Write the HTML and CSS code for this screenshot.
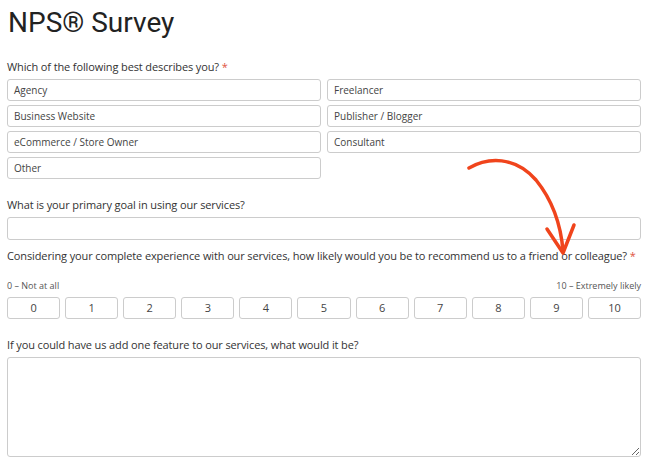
FILE: index.html
```html
<!DOCTYPE html>
<html lang="en">
<head>
  <meta charset="UTF-8" />
  <title>NPS Survey</title>
  <link rel="stylesheet" href="styles.css">
</head>
<body>
  <div class="survey">
    <h1 class="title">NPS&reg; Survey</h1>

    <div class="field field-choices">
      <label class="field-label">Which of the following best describes you? <span class="req">*</span></label>
      <div class="choices">
        <div class="choice">Agency</div>
        <div class="choice">Freelancer</div>
        <div class="choice">Business Website</div>
        <div class="choice">Publisher / Blogger</div>
        <div class="choice">eCommerce / Store Owner</div>
        <div class="choice">Consultant</div>
        <div class="choice">Other</div>
      </div>
    </div>

    <div class="field field-goal">
      <label class="field-label">What is your primary goal in using our services?</label>
      <input class="text-input" type="text">
    </div>

    <div class="field field-nps">
      <label class="field-label">Considering your complete experience with our services, how likely would you be to recommend us to a friend or colleague? <span class="req">*</span></label>
      <div class="scale-labels">
        <span>0 &ndash; Not at all</span>
        <span>10 &ndash; Extremely likely</span>
      </div>
      <div class="scale">
        <div class="scale-btn">0</div>
        <div class="scale-btn">1</div>
        <div class="scale-btn">2</div>
        <div class="scale-btn">3</div>
        <div class="scale-btn">4</div>
        <div class="scale-btn">5</div>
        <div class="scale-btn">6</div>
        <div class="scale-btn">7</div>
        <div class="scale-btn">8</div>
        <div class="scale-btn">9</div>
        <div class="scale-btn">10</div>
      </div>
    </div>

    <div class="field">
      <label class="field-label">If you could have us add one feature to our services, what would it be?</label>
      <textarea class="text-area"></textarea>
    </div>
  </div>

  <!-- hand drawn arrow pointing at the 9 -->
  <svg class="arrow" width="650" height="468" viewBox="0 0 650 468">
    <path d="M469 168 C488 157 515 156 536 180 C553 201 561 226 563 251" />
    <path d="M547 229 L563 253 L574 225" />
  </svg>
</body>
</html>
```

FILE: styles.css
```css
body {
  margin: 0;
  font-family: "Open Sans", "DejaVu Sans", sans-serif;
  color: #333;
  background: #fff;
}

.survey {
  padding: 0 9px 0 7px;
}

.title {
  margin: 0 0 18px;
  padding: 4px 0 0 1px;
  font-family: Roboto, "Open Sans", sans-serif;
  font-size: 28px;
  line-height: 38px;
  font-weight: 400;
  color: #222;
}

/* spacing below each question */
.field-choices {
  margin-bottom: 19px;
}

.field-goal {
  margin-bottom: 9px;
}

.field-nps {
  margin-bottom: 19px;
}

.field-label {
  display: block;
  font-size: 11px;
  line-height: 14px;
  letter-spacing: -0.12px;
  margin-bottom: 5px;
  color: #333;
}

.req {
  color: #e0533f;
}

.choices {
  display: grid;
  grid-template-columns: 1fr 1fr;
  column-gap: 6px;
  row-gap: 4px;
}

.choice {
  height: 22px;
  box-sizing: border-box;
  border: 1px solid #ccc;
  border-radius: 3px;
  padding: 0 6px;
  font-size: 10px;
  line-height: 20px;
  color: #444;
}

.text-input {
  display: block;
  width: 100%;
  height: 23px;
  box-sizing: border-box;
  border: 1px solid #ccc;
  border-radius: 3px;
  margin: 0;
}

.scale-labels {
  display: flex;
  justify-content: space-between;
  font-size: 9px;
  line-height: 12px;
  color: #555;
  margin-top: 17px;
  margin-bottom: 5px;
}

.scale {
  display: flex;
  gap: 5px;
}

.scale-btn {
  flex: 1;
  height: 22px;
  box-sizing: border-box;
  border: 1px solid #ccc;
  border-radius: 3px;
  text-align: center;
  font-size: 11px;
  line-height: 20px;
  color: #444;
}

.text-area {
  display: block;
  width: 100%;
  height: 100px;
  box-sizing: border-box;
  border: 1px solid #ccc;
  border-radius: 3px;
  margin: 0;
}

.arrow {
  position: absolute;
  top: 0;
  left: 0;
  pointer-events: none;
  fill: none;
  stroke: #f0441c;
  stroke-width: 3.5;
  stroke-linecap: round;
  stroke-linejoin: round;
}
```
